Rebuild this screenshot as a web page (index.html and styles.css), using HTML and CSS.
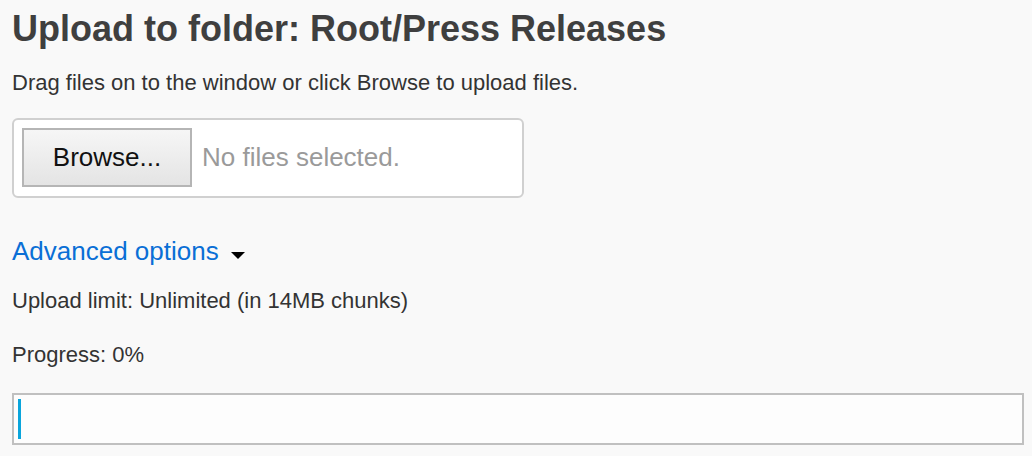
FILE: index.html
```html
<!DOCTYPE html>
<html lang="en">
<head>
<meta charset="utf-8">
<title>Upload to folder</title>
<link rel="stylesheet" href="styles.css">
</head>
<body>
<main class="page">
  <h1 class="title">Upload to folder: Root/Press Releases</h1>
  <p class="hint">Drag files on to the window or click Browse to upload files.</p>
  <div class="file-box">
    <button class="browse" type="button">Browse...</button>
    <span class="no-files">No files selected.</span>
  </div>
  <a class="advanced" href="#">Advanced options <span class="caret" aria-hidden="true"></span></a>
  <p class="info">Upload limit: Unlimited (in 14MB chunks)</p>
  <p class="info progress-label">Progress: 0%</p>
  <div class="progress">
    <div class="progress-fill" style="width: 3px"></div>
  </div>
</main>
</body>
</html>
```

FILE: styles.css
```css
html, body {
  margin: 0;
  padding: 0;
  background: #f9f9f9;
}
body {
  font-family: "Liberation Sans", Arial, Helvetica, sans-serif;
  color: #3c3c3c;
}
.page {
  padding: 8px 8px 0 12px;
  display: flex;
  flex-direction: column;
  align-items: flex-start;
}
.title {
  margin: 0;
  font-size: 36px;
  line-height: 42px;
  font-weight: bold;
  color: #3f3f3f;
}
.hint {
  margin: 20px 0 0;
  font-size: 22px;
  line-height: 26px;
  color: #333;
}
.file-box {
  margin-top: 22px;
  box-sizing: border-box;
  width: 512px;
  height: 80px;
  padding: 8px;
  background: #fff;
  border: 2px solid #d0d0d0;
  border-radius: 6px;
  display: flex;
  align-items: flex-start;
  gap: 10px;
}
.browse {
  box-sizing: border-box;
  width: 170px;
  height: 59px;
  margin: 0;
  padding: 0;
  font-family: "Liberation Sans", Arial, Helvetica, sans-serif;
  font-size: 26px;
  color: #111;
  background: linear-gradient(#f6f6f6, #e4e4e4);
  border: 2px solid #b5b5b5;
  border-radius: 0;
}
.no-files {
  font-size: 26px;
  line-height: 59px;
  color: #9a9a9a;
}
.advanced {
  margin-top: 38px;
  font-size: 26px;
  line-height: 30px;
  color: #0a6fd6;
  text-decoration: none;
  display: flex;
  align-items: center;
  gap: 12px;
}
.caret {
  width: 0;
  height: 0;
  border-left: 7.5px solid transparent;
  border-right: 7.5px solid transparent;
  border-top: 7.5px solid #000;
  margin-top: 8px;
}
.info {
  margin: 22px 0 0;
  font-size: 22px;
  line-height: 26px;
  color: #333;
}
.progress-label {
  margin-top: 28px;
}
.progress {
  margin-top: 25px;
  box-sizing: border-box;
  width: 100%;
  height: 52px;
  padding: 4px;
  background: #fdfdfd;
  border: 2px solid #c0c0c0;
  display: flex;
}
.progress-fill {
  height: 100%;
  background: #0aa5dc;
}
```
